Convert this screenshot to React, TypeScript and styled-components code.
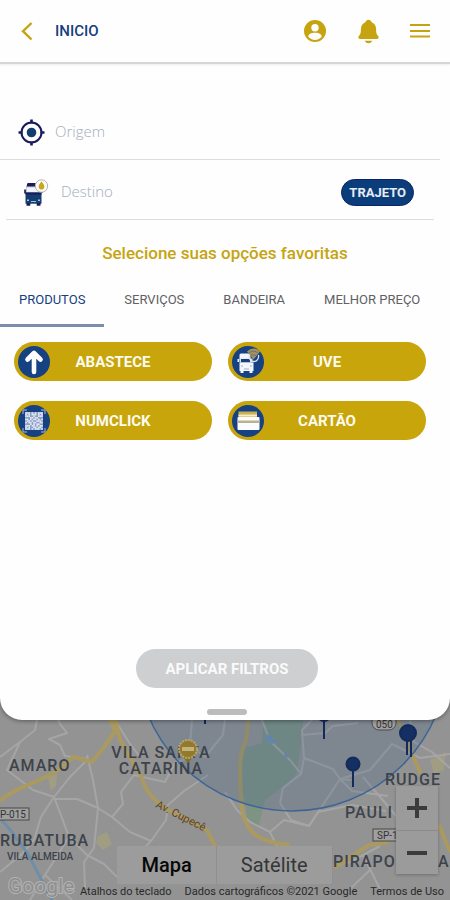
import React, { useState } from "react";
import styled, { createGlobalStyle } from "styled-components";
import { IoNotifications } from "react-icons/io5";

const gold = "#c6a410";
const navy = "#153f80";

const GlobalStyle = createGlobalStyle`
  *, *::before, *::after { box-sizing: border-box; }
  body { margin: 0; background: #949494; font-family: Roboto, "Liberation Sans", sans-serif; }
  button, input { font-family: inherit; }
`;

const Page = styled.div`
  display: flex;
  flex-direction: column;
  min-height: 100vh;
`;

const Sheet = styled.main`
  position: relative;
  z-index: 1;
  display: flex;
  flex-direction: column;
  min-height: 80vh;
  background: #fefefe;
  border-radius: 0 0 22px 22px;
  box-shadow: 0 1px 4px rgba(0, 0, 0, 0.4);
`;

const Header = styled.header`
  display: flex;
  align-items: center;
  height: 64px;
  padding: 0 19px;
  border-bottom: 2px solid #d5d6d8;
  box-shadow: 0 1px 2px rgba(0, 0, 0, 0.08);
`;

const IconButton = styled.button`
  display: grid;
  place-items: center;
  padding: 0;
  border: 0;
  background: none;
  color: ${gold};
  cursor: pointer;
`;

const Title = styled.h1`
  margin: 0 auto 0 20px;
  color: ${navy};
  font-size: 15px;
  font-weight: 500;
  line-height: 20px;
`;

const HeaderActions = styled.div`
  display: flex;
  align-items: center;
  gap: 27px;
`;

const RouteForm = styled.form`
  padding-top: 40px;
`;

const Field = styled.div<{ $inset?: boolean }>`
  display: flex;
  align-items: center;
  gap: ${(p) => (p.$inset ? 12 : 10)}px;
  height: ${(p) => (p.$inset ? 60 : 56)}px;
  margin: ${(p) => (p.$inset ? "0 16px 0 6px" : "0 10px 0 0")};
  padding: ${(p) => (p.$inset ? "6px 20px 0 17px" : "2px 18px 0")};
  border-bottom: 1px solid #dcdddf;
`;

const FieldLabel = styled.label`
  display: grid;
`;

const TextInput = styled.input`
  flex: 1;
  min-width: 0;
  padding: 0 0 4px;
  border: 0;
  outline: 0;
  background: none;
  color: ${navy};
  font-family: "Open Sans", "Noto Sans", sans-serif;
  font-size: 15px;
  font-weight: 300;
  line-height: 20px;

  &::placeholder { color: #a3adbd; opacity: 1; }
`;

const RouteButton = styled.button`
  height: 27px;
  padding: 0 7px;
  border: 1px solid #0b2468;
  border-radius: 14px;
  background: #0b3d7a;
  color: #e9edf5;
  font-size: 13px;
  font-weight: 700;
  line-height: 20px;
`;

const Heading = styled.h2`
  margin: 22px 0 12px;
  color: ${gold};
  font-size: 17px;
  font-weight: 500;
  line-height: 22px;
  text-align: center;
`;

const Tabs = styled.div`
  display: flex;
  gap: 1px;
  overflow: hidden;
`;

const Tab = styled.button<{ $active: boolean }>`
  flex: none;
  height: 51px;
  padding: 0 19px;
  border: 0;
  border-bottom: 3px solid ${(p) => (p.$active ? "#7d8eab" : "transparent")};
  background: none;
  color: ${(p) => (p.$active ? navy : "#606164")};
  font-size: 13px;
  font-weight: 400;
  line-height: 20px;
  white-space: nowrap;
`;

const Options = styled.div`
  display: grid;
  grid-template-columns: 1fr 1fr;
  gap: 20px 16px;
  padding: 15px 24px 20px 14px;
`;

const OptionButton = styled.button`
  display: grid;
  grid-template-columns: 34px 1fr 34px;
  align-items: center;
  height: 39px;
  padding: 0 3px;
  border: 0;
  border-radius: 20px;
  background: #c7a50b;
  color: #fdfbef;
  font-size: 15px;
  font-weight: 700;
  line-height: 20px;
`;

const SheetFooter = styled.footer`
  display: flex;
  flex-direction: column;
  align-items: center;
  gap: 21px;
  margin-top: auto;
  padding: 0 0 5px 4px;
`;

const ApplyButton = styled.button`
  height: 39px;
  padding: 0 29px;
  border: 0;
  border-radius: 20px;
  background: #cdcfd0;
  color: #fafafa;
  font-size: 15px;
  font-weight: 700;
  line-height: 20px;
`;

const Handle = styled.span`
  width: 40px;
  height: 6px;
  border-radius: 3px;
  background: #bcbcbc;
`;

const MapArea = styled.section`
  position: relative;
  flex: 1;
  display: flex;
  flex-direction: column;
  justify-content: flex-end;
  min-height: 210px;
  margin-top: -30px;
  overflow: hidden;
  background: #949494;
`;

const MapDrawing = styled.svg`
  position: absolute;
  inset: 0;
  width: 100%;
  height: 100%;
`;

const MapTypes = styled.div`
  position: relative;
  display: flex;
  align-self: center;
  height: 38px;
  background: #9c9c9c;
`;

const MapType = styled.button<{ $active: boolean }>`
  padding: 0 24px;
  border: 0;
  border-right: 1px solid #909090;
  background: none;
  color: ${(p) => (p.$active ? "#080808" : "#363636")};
  font-size: 20px;
  font-weight: ${(p) => (p.$active ? 500 : 400)};
  line-height: 24px;
`;

const Zoom = styled.div`
  position: absolute;
  right: 12px;
  bottom: 26px;
  display: grid;
  width: 42px;
  background: #9b9b9b;
  box-shadow: 0 1px 3px rgba(0, 0, 0, 0.25);
`;

const ZoomButton = styled.button`
  display: grid;
  place-items: center;
  height: 44px;
  padding: 0;
  border: 0;
  background: none;
  color: #3b3b3b;

  & + & { border-top: 1px solid #8b8b8b; }
`;

const Attribution = styled.div`
  position: relative;
  display: flex;
  justify-content: flex-end;
  gap: 13px;
  height: 16px;
  padding-right: 6px;
  color: #292929;
  font-size: 11px;
  line-height: 16px;
  white-space: nowrap;
`;

const AttributionButton = styled.button`
  padding: 0;
  border: 0;
  background: none;
  color: inherit;
  font-size: inherit;
  line-height: inherit;
`;

const AttributionLink = styled.a`
  color: inherit;
  text-decoration: none;
`;

const BackIcon = () => (
  <svg width="16" height="20" viewBox="0 0 16 20" fill="none" stroke="currentColor" strokeWidth="2.4">
    <path d="M12.5 2 4 10.2 12.5 18.5" />
  </svg>
);

const AccountIcon = () => (
  <svg width="26" height="26" viewBox="0 0 26 26">
    <circle cx="13" cy="13" r="11" fill="currentColor" />
    <circle cx="13" cy="9.700" r="3.700" fill="#fefefe" />
    <path d="M6.300 18.800c0-2.700 3-4 6.700-4s6.700 1.300 6.700 4c-1.600 2-4 3.200-6.700 3.200s-5.100-1.200-6.700-3.200z" fill="#fefefe" />
  </svg>
);

const MenuIcon = () => (
  <svg width="22" height="20" viewBox="0 0 22 20" stroke="currentColor" strokeWidth="2">
    <path d="M1 4h20M1 10h20M1 15.500h20" />
  </svg>
);

const OriginIcon = () => (
  <svg width="27" height="27" viewBox="0 0 27 27">
    <g fill="none" stroke="#1b1b5c" strokeWidth="2">
      <circle cx="13.500" cy="13.500" r="10" />
      <path d="M13.500 .5v4M13.500 22.500v4M.5 13.500h4M22.500 13.500h4" strokeWidth="2.600" />
    </g>
    <circle cx="13.500" cy="13.500" r="4.800" fill="#133c70" />
  </svg>
);

const DestinationIcon = () => (
  <svg width="26" height="28" viewBox="0 0 26 28">
    <path d="M4 5.500c0-1 .6-1.500 1.500-1.500H15l1.500 4H3.500z" fill="#1b1b5c" />
    <path d="M3.500 8h14v6.500h-14z" fill="#f2f4fa" stroke="#c5cbd9" />
    <path d="M1.200 10.500h1.700v4H1.200zM18 11h1.500v3H18z" fill="#1b1b5c" />
    <path d="M2.500 13.500h16v11.200h-16z" fill="#123f70" />
    <path d="M2.500 13.500h16v2h-16zM3.500 24h3.800v2.800H3.500zM13.700 24h3.800v2.800h-3.800z" fill="#1b1b5c" />
    <path d="M4 20.500h2v1.500H4zM15 20.500h2v1.500h-2zM8 22h5v1H8z" fill="#a9bdd3" />
    <circle cx="18.500" cy="7" r="6.200" fill="#fdfdfb" stroke="#b3b2ab" />
    <path d="M18.500 2.300c1.500 2.200 2.800 3.600 2.800 5.400a2.800 2.800 0 0 1-5.600 0c0-1.800 1.300-3.200 2.800-5.400z" fill="#cba51b" />
  </svg>
);

const Badge = ({ children }: { children: React.ReactNode }) => (
  <svg width="34" height="34" viewBox="0 0 34 34">
    <circle cx="17" cy="17" r="16" fill="#164182" />
    {children}
  </svg>
);

const ArrowBadge = () => (
  <Badge>
    <path d="M17 27V8.500M10.500 14.500 17 8l6.500 6.500" fill="none" stroke="#fff" strokeWidth="4.600" strokeLinecap="round" strokeLinejoin="round" />
  </Badge>
);

const TruckBadge = () => (
  <Badge>
    <rect x="8.500" y="8.500" width="11" height="7" rx="1.500" fill="#f4f6fb" />
    <path d="M8.500 13.500h13v4h-13z" fill="#d8dfed" />
    <path d="M10 14h9v3h-9z" fill="#173f7b" />
    <path d="M8.500 17.500h14V26h-14zM9.500 25h3v3h-3zM18.500 25h3v3h-3zM6.500 14H8v3H6.500z" fill="#f4f6fb" />
    <path d="M10 21h2M19 21h2M13 24h5" stroke="#9fb0cf" />
    <path d="M18 10c-.5 4 2 6.500 5 6.500s5-3 4.500-6.500" fill="none" stroke="#dfe3ee" strokeWidth="1.300" />
    <path d="M16 6.500c4-4 9.500-4 13 0l-6.500 8z" fill="#a2925a" />
    <path d="M17.500 8.500c3-3 7-3 10 0M19.500 11c2-1.500 4-1.500 6 0" fill="none" stroke="#57678a" strokeWidth=".8" />
  </Badge>
);

const qrCells = [
  "11101010111", "10101110101", "11100100111", "00011011000", "11010110101",
  "01101001110", "10110110011", "00010101100", "11101101011", "10100110110", "11101011101",
];

const QrBadge = () => (
  <Badge>
    <rect x="8" y="8" width="18" height="18" fill="#8b9fc5" />
    {qrCells.map((row, y) =>
      row.split("").map((cell, x) =>
        cell === "1" ? <rect key={`${x}-${y}`} x={8.2 + x * 1.6} y={8.2 + y * 1.6} width="1.600" height="1.600" fill="#e3e9f4" /> : null
      )
    )}
    <path d="M6 10V6h4M24 6h4v4M28 24v4h-4M10 28H6v-4" fill="none" stroke="#a9b9d6" />
  </Badge>
);

const CardBadge = () => (
  <Badge>
    <path d="M7.500 7.500h18.500v11H7.500z" fill="#cbb14b" />
    <path d="M7.500 10.500h18.500v2H7.500z" fill="#f3edce" />
    <rect x="6.500" y="13" width="22" height="13" rx="1" fill="#fbfcfe" />
    <path d="M6.500 16.500h22v2.500h-22z" fill="#b9b38f" />
  </Badge>
);

const Plus = ({ minus }: { minus?: boolean }) => (
  <svg width="22" height="22" viewBox="0 0 22 22" stroke="currentColor" strokeWidth="4">
    <path d={minus ? "M1 11h20" : "M1 11h20M11 1v20"} />
  </svg>
);

const minorRoads = [
  "M0 757 20 742 35 730 38 714M20 742 7 770 33 790 54 797 41 817 34 840 22 854 0 872",
  "M54 797 62 818 69 837 87 855 104 864 117 877M54 797 70 777 88 759M87 755 93 780 98 808 77 799H54",
  "M98 808 112 817 123 804 121 792 134 775M112 817 130 832 151 841 166 820 168 805 184 791 208 775",
  "M88 759 65 756 60 745 49 739 67 733 60 724 55 712M115 720 130 744 140 757M134 775 165 782 175 763 191 757",
  "M151 841 134 858M98 808 94 848 84 862 85 888M69 837 45 875 30 900M45 875 72 900",
  "M192 720 190 745 205 757 223 735 225 720M225 792 237 810 250 822 270 832 284 820 309 826 318 812",
  "M262 720 270 741 290 760 301 774 283 788 280 803 291 820 309 826 340 779 370 770 392 744 420 758",
  "M301 774 304 758 333 769 340 779 351 780M301 735 325 733 333 726 358 723M304 758 302 730 312 720",
  "M318 812 352 805 386 811M340 779 352 791 388 796M363 777 398 818M270 832 281 855M380 846 350 862 334 865",
  "M420 758 450 754M410 720 414 742 432 752M432 752 450 768M363 855 380 889M370 870 350 889",
];

const majorRoads = [
  "M0 801C18 784 50 782 73 757L92 762 104 747 115 731 108 714",
  "M114 714 120 740 130 757 142 778C145 790 152 799 165 808L207 830 216 848",
  "M249 714 246 740C238 755 240 775 241 803C244 830 255 842 290 845",
  "M398 720 416 763 421 774M439 825 450 852M334 868 369 845 389 842",
];

const MapPicture = () => (
  <MapDrawing viewBox="0 690 450 210" preserveAspectRatio="xMidYMin slice" aria-hidden="true">
    <rect y="600" width="450" height="600" fill="#939393" />
    <path d="M98 836l9-4 5 12-9 6-7-7zM48 777l9-3-1 12-5 5zM430 760l16-8-2 18-10 4z" fill="#a09d83" />
    <path d="M264 714h40l-4 37-4 24-14 12-17 13-6 25-11-3-8-47 5-27 17-5z" fill="#7d9483" />
    <g fill="none" stroke="#a5a5a5" strokeWidth="2" strokeLinejoin="round">
      {minorRoads.map((d) => <path key={d} d={d} />)}
    </g>
    <g fill="none" stroke="#aa9a5f" strokeWidth="4" strokeLinejoin="round">
      {majorRoads.map((d) => <path key={d} d={d} />)}
    </g>
    <path d="M0 818 12 832 28 854 40 877 52 900" fill="none" stroke="#6f8ea8" strokeWidth="3" />
    <circle cx="292" cy="655" r="156" fill="#3d618b" fillOpacity=".24" stroke="#3d6597" strokeWidth="1.500" />
    <path d="m267 734 9 8-4 2-7-6zM284 753l5 4-4 1z" fill="#5f85b2" />
    <g fill="#3d434b" fontFamily="Roboto, sans-serif" fontSize="16" fontWeight="500" letterSpacing="1">
      <text x="9" y="771">AMARO</text>
      <text x="161" y="758" textAnchor="middle">VILA SANTA</text>
      <text x="161" y="774" textAnchor="middle">CATARINA</text>
      <text x="0" y="846">RUBATUBA</text>
      <text x="385" y="785">RUDGE</text>
      <text x="345" y="818">PAULI</text>
      <text x="333" y="867">PIRAPO</text>
      <text x="438" y="867">A</text>
    </g>
    <text x="7" y="860" fill="#3d434b" fontFamily="Roboto, sans-serif" fontSize="10" fontWeight="500">VILA ALMEIDA</text>
    <path id="cupece" d="M155 807 207 833" fill="none" />
    <text fill="#57422c" fontFamily="Roboto, sans-serif" fontSize="11"><textPath href="#cupece">Av. Cupecê</textPath></text>
    <g fill="#a0a0a0" stroke="#4b4b4b">
      <rect x="-8" y="808" width="37" height="12" />
      <rect x="373" y="829" width="34" height="12" />
      <rect x="372" y="714" width="24" height="16" rx="7" />
    </g>
    <g fill="#333" fontFamily="Roboto, sans-serif" fontSize="10">
      <text x="0" y="818">P-015</text>
      <text x="377" y="839">SP-1</text>
      <text x="376" y="728">050</text>
    </g>
    <g stroke="#142a5b" strokeWidth="2" fill="#142f61">
      <path d="M324 715v24M353 763v24M407 735v20M411 735v22M205 715v9" />
      <circle cx="324" cy="715" r="6" />
      <circle cx="353" cy="764" r="6.500" />
      <circle cx="408" cy="733" r="8" />
    </g>
    <path d="m182 756 6 7 6-7z" fill="#8a6f1d" />
    <circle cx="188" cy="749" r="9" fill="#93792a" stroke="#b4a574" strokeWidth="2" strokeDasharray="2 1" />
    <path d="M182 747h12v4h-12z" fill="#c1b27e" />
    <text x="8" y="893" fill="#8f8f8f" stroke="#b4b4b4" strokeWidth="2" paintOrder="stroke" fontFamily="Roboto, sans-serif" fontSize="21">Google</text>
  </MapDrawing>
);

const tabs = ["PRODUTOS", "SERVIÇOS", "BANDEIRA", "MELHOR PREÇO"];
const options = [
  { name: "ABASTECE", Icon: ArrowBadge },
  { name: "UVE", Icon: TruckBadge },
  { name: "NUMCLICK", Icon: QrBadge },
  { name: "CARTÃO", Icon: CardBadge },
];

export default function App() {
  const [tab, setTab] = useState(tabs[0]);
  const [mapType, setMapType] = useState("Mapa");
  return (
    <Page>
      <GlobalStyle />
      <Sheet>
        <Header>
          <IconButton aria-label="Voltar"><BackIcon /></IconButton>
          <Title>INICIO</Title>
          <HeaderActions>
            <IconButton aria-label="Perfil"><AccountIcon /></IconButton>
            <IconButton aria-label="Notificações"><IoNotifications size={27} /></IconButton>
            <IconButton aria-label="Menu"><MenuIcon /></IconButton>
          </HeaderActions>
        </Header>
        <RouteForm onSubmit={(e) => e.preventDefault()}>
          <Field>
            <FieldLabel htmlFor="origem" aria-label="Origem"><OriginIcon /></FieldLabel>
            <TextInput id="origem" placeholder="Origem" />
          </Field>
          <Field $inset>
            <FieldLabel htmlFor="destino" aria-label="Destino"><DestinationIcon /></FieldLabel>
            <TextInput id="destino" placeholder="Destino" />
            <RouteButton type="submit">TRAJETO</RouteButton>
          </Field>
        </RouteForm>
        <Heading>Selecione suas opções favoritas</Heading>
        <Tabs role="tablist">
          {tabs.map((name) => (
            <Tab key={name} role="tab" aria-selected={tab === name} $active={tab === name} onClick={() => setTab(name)}>
              {name}
            </Tab>
          ))}
        </Tabs>
        <Options>
          {options.map(({ name, Icon }) => (
            <OptionButton key={name}><Icon /><span>{name}</span></OptionButton>
          ))}
        </Options>
        <SheetFooter>
          <ApplyButton>APLICAR FILTROS</ApplyButton>
          <Handle />
        </SheetFooter>
      </Sheet>
      <MapArea aria-label="Mapa">
        <MapPicture />
        <MapTypes>
          {["Mapa", "Satélite"].map((name) => (
            <MapType key={name} $active={mapType === name} onClick={() => setMapType(name)}>{name}</MapType>
          ))}
        </MapTypes>
        <Attribution>
          <AttributionButton>Atalhos do teclado</AttributionButton>
          <span>Dados cartográficos ©2021 Google</span>
          <AttributionLink href="#termos">Termos de Uso</AttributionLink>
        </Attribution>
        <Zoom>
          <ZoomButton aria-label="Aumentar zoom"><Plus /></ZoomButton>
          <ZoomButton aria-label="Diminuir zoom"><Plus minus /></ZoomButton>
        </Zoom>
      </MapArea>
    </Page>
  );
}
